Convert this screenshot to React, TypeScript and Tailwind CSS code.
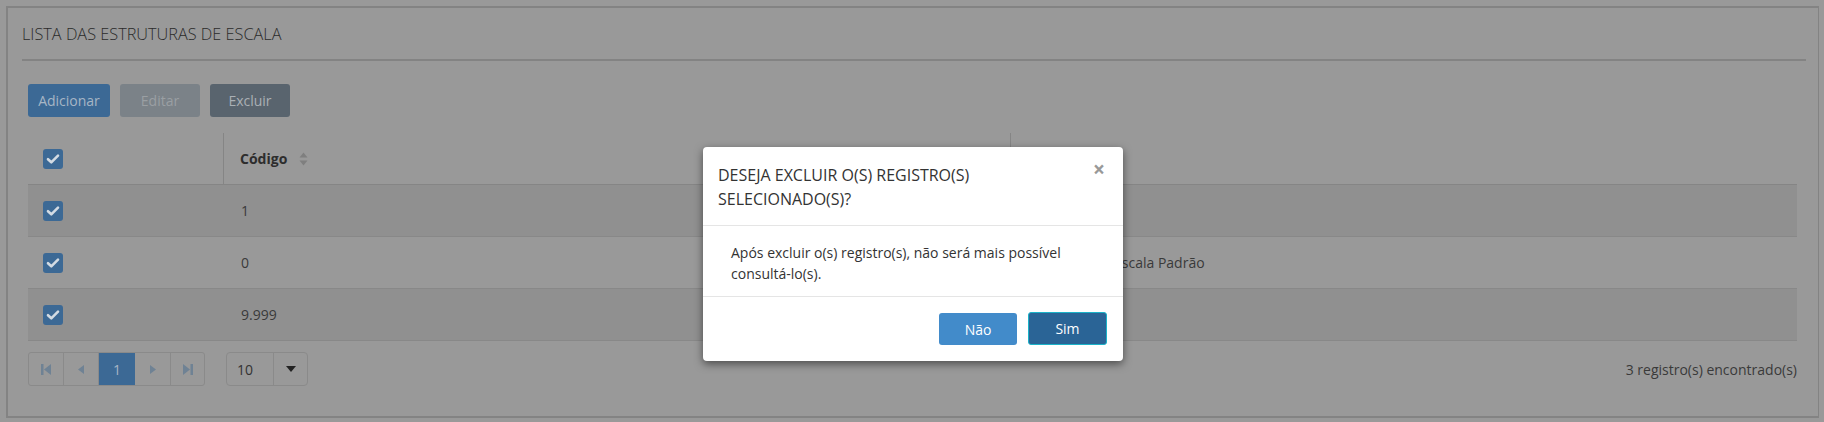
import React from "react";

const font = { fontFamily: '"Open Sans", "Liberation Sans", sans-serif' };

function Check() {
  return (
    <div className="w-[20px] h-[20px] rounded-[3px] bg-[#3c6995] flex items-center justify-center">
      <svg width="14" height="12" viewBox="0 0 14 12">
        <path d="M2 6.2 L5.3 9.3 L12 2.6" stroke="#d3dbe3" strokeWidth="2.6" fill="none" strokeLinecap="round" strokeLinejoin="round" />
      </svg>
    </div>
  );
}

function SortIcon() {
  return (
    <svg width="9" height="14" viewBox="0 0 9 14" className="ml-[12px]">
      <path d="M4.5 0.5 L8.5 5.5 L0.5 5.5 Z" fill="#7f7f7f" />
      <path d="M4.5 13.5 L8.5 8.5 L0.5 8.5 Z" fill="#7f7f7f" />
    </svg>
  );
}

const rows = [
  { code: "1", desc: "", striped: true },
  { code: "0", desc: "Escala Padrão", striped: false },
  { code: "9.999", desc: "", striped: true },
];

export default function App() {
  return (
    <div className="w-[1824px] h-[422px] bg-[#999999] relative overflow-hidden" style={font}>
      <div className="absolute inset-0 pt-[6px] pl-[6px] pr-[5px] pb-[4px]">
        <div className="w-full h-full border-[2px] border-[#838383] border-r-[1px] flex flex-col pl-[14px] pr-[12px]">
          <div className="h-[53px] border-b-[2px] border-[#838383] flex items-center pt-[1px]">
            <span className="text-[16.3px] text-[#2b2b2b] font-light">LISTA DAS ESTRUTURAS DE ESCALA</span>
          </div>
          <div className="pl-[6px] pr-[9px]">
            <div className="flex gap-[10px] mt-[23px]">
              <div className="w-[82px] h-[33px] rounded-[3px] bg-[#3c6995] flex items-center justify-center text-[14px] text-[#a7b6c5]">Adicionar</div>
              <div className="w-[80px] h-[33px] rounded-[3px] bg-[#7b8288] flex items-center justify-center text-[14px] text-[#9a9fa3]">Editar</div>
              <div className="w-[80px] h-[33px] rounded-[3px] bg-[#59646e] flex items-center justify-center text-[14px] text-[#aab0b5]">Excluir</div>
            </div>
            <div className="mt-[16px]">
              <div className="h-[52px] flex border-b border-[#858585]">
                <div className="w-[196px] border-r border-[#858585] flex items-center pl-[15px]">
                  <Check />
                </div>
                <div className="w-[787px] border-r border-[#858585] flex items-center pl-[16px]">
                  <span className="text-[14px] font-bold text-[#2d2d2d]">Código</span>
                  <SortIcon />
                </div>
                <div className="flex-1 flex items-center pl-[16px]">
                  <span className="text-[14px] font-bold text-[#2d2d2d]">Descrição</span>
                  <SortIcon />
                </div>
              </div>
              {rows.map((r, i) => (
                <div key={i} className={`h-[52px] flex border-b border-[#888888] ${r.striped ? "bg-[#909090]" : "bg-[#999999]"}`}>
                  <div className="w-[196px] flex items-center pl-[15px]">
                    <Check />
                  </div>
                  <div className="w-[787px] flex items-center pl-[17px] text-[14px] text-[#3a3a3a]">{r.code}</div>
                  <div className="flex-1 flex items-center pl-[103px] text-[14px] text-[#3a3a3a]">{r.desc}</div>
                </div>
              ))}
            </div>
            <div className="flex items-center mt-[11px]">
              <div className="flex h-[34px] border border-[#8a8a8a] rounded-[3px] overflow-hidden">
                <div className="w-[35px] border-r border-[#8a8a8a] flex items-center justify-center">
                  <svg width="10" height="11" viewBox="0 0 10 11"><rect x="0" y="0" width="2.5" height="11" fill="#6f8294" /><path d="M10 0 L3 5.5 L10 11 Z" fill="#6f8294" /></svg>
                </div>
                <div className="w-[35px] border-r border-[#8a8a8a] flex items-center justify-center">
                  <svg width="6" height="9" viewBox="0 0 6 9"><path d="M6 0 L0 4.5 L6 9 Z" fill="#6f8294" /></svg>
                </div>
                <div className="w-[36px] bg-[#3c6995] flex items-center justify-center text-[14px] text-[#a7b6c5]">1</div>
                <div className="w-[36px] border-r border-[#8a8a8a] flex items-center justify-center">
                  <svg width="6" height="9" viewBox="0 0 6 9"><path d="M0 0 L6 4.5 L0 9 Z" fill="#6f8294" /></svg>
                </div>
                <div className="w-[33px] flex items-center justify-center">
                  <svg width="10" height="11" viewBox="0 0 10 11"><path d="M0 0 L7 5.5 L0 11 Z" fill="#6f8294" /><rect x="7.5" y="0" width="2.5" height="11" fill="#6f8294" /></svg>
                </div>
              </div>
              <div className="ml-[21px] flex h-[34px] w-[82px] border border-[#8a8a8a] rounded-[4px]">
                <div className="w-[47px] border-r border-[#8a8a8a] flex items-center pl-[10px] text-[14px] text-[#333333]">10</div>
                <div className="flex-1 flex items-center justify-center">
                  <svg width="10" height="6" viewBox="0 0 10 6"><path d="M0 0 L10 0 L5 6 Z" fill="#222222" /></svg>
                </div>
              </div>
              <div className="flex-1 text-right text-[14px] text-[#3a3a3a]">3 registro(s) encontrado(s)</div>
            </div>
          </div>
        </div>
      </div>

      <div className="absolute left-[703px] top-[147px] w-[420px] bg-white rounded-[4px] shadow-[0_3px_9px_rgba(0,0,0,0.5)]">
        <div className="relative border-b border-[#e5e5e5] pl-[15px] pr-[40px] pt-[16px] pb-[14px]">
          <div className="text-[16px] leading-[24px] text-[#333333]">DESEJA EXCLUIR O(S) REGISTRO(S)<br />SELECIONADO(S)?</div>
          <div className="absolute right-[18px] top-[12px] text-[21px] leading-[21px] font-bold text-[#999999]">×</div>
        </div>
        <div className="px-[28px] pt-[16px] pb-[12px] text-[14px] leading-[21px] text-[#333333]">
          Após excluir o(s) registro(s), não será mais possível consultá-lo(s).
        </div>
        <div className="border-t border-[#e5e5e5] flex justify-end gap-[11px] pr-[16px] pt-[16px] pb-[16px]">
          <div className="w-[78px] h-[32px] rounded-[3px] bg-[#428bca] text-white text-[14px] flex items-center justify-center">Não</div>
          <div className="w-[79px] h-[33px] -mt-[1px] rounded-[3px] bg-[#2a6496] border border-[#1bb3c9] text-white text-[14px] flex items-center justify-center">Sim</div>
        </div>
      </div>
    </div>
  );
}
